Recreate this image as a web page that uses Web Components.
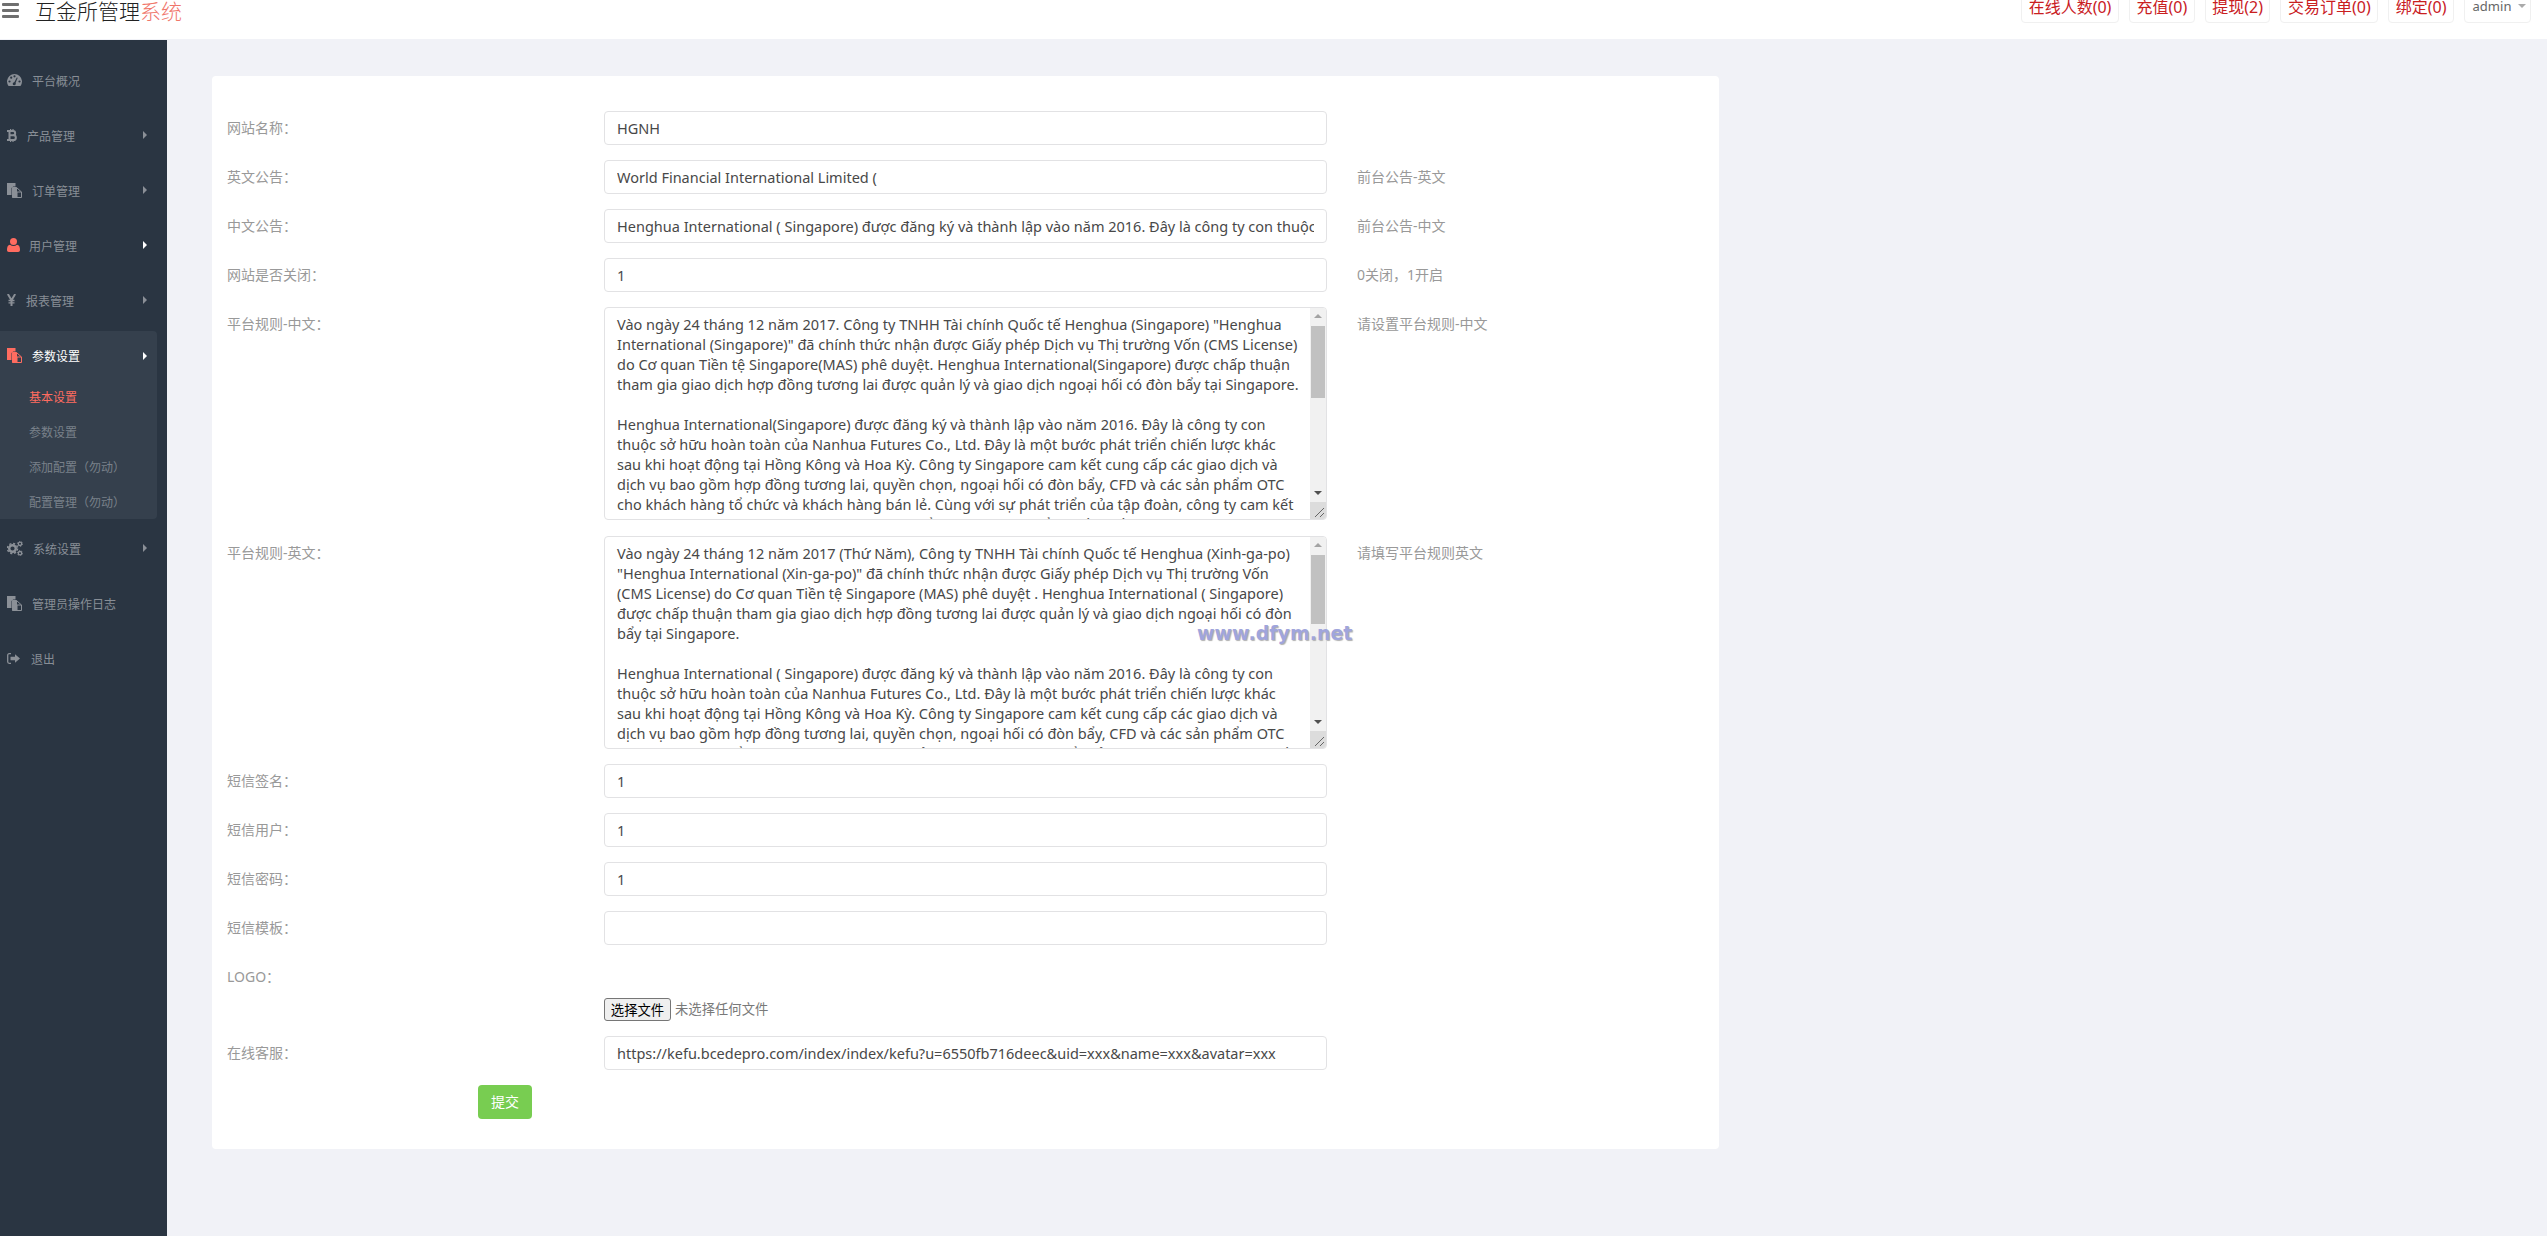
<!DOCTYPE html>
<html lang="zh">
<head>
<meta charset="utf-8">
<title>互金所管理系统</title>
<style>
  html, body { margin: 0; height: 100%; overflow: hidden; }
  body { font-family: "Noto Sans", "Noto Sans CJK SC", sans-serif; font-size: 14px; background: #f1f2f7; }
</style>
</head>
<body>
<admin-app>
  <admin-topbar slot="top"></admin-topbar>
  <admin-sidebar slot="side"></admin-sidebar>
  <settings-form></settings-form>
</admin-app>
<water-mark>www.dfym.net</water-mark>

<script>
const ICONS = {
  gauge: `<svg width="15" height="12" viewBox="0 0 15 12"><path fill="currentColor" d="M1.500 12A7.500 7.500 0 1 1 13.500 12z"/><g fill="#2a3542"><circle cx="2.500" cy="7.500" r="1.100"/><circle cx="4.200" cy="3.700" r="1.100"/><circle cx="7.500" cy="2.300" r="1.100"/><circle cx="12.500" cy="7.500" r="1.100"/><circle cx="7.200" cy="9.800" r="1.500"/><path d="M6.700 9.500 9.800 3.400l.9.400L8 10.200z"/></g></svg>`,
  btc: `<svg width="10" height="13" viewBox="0 0 10 13"><path fill="none" stroke="currentColor" stroke-width="2" d="M0 2h6a2.100 2.100 0 0 1 0 4.300H2.500h4a2.350 2.350 0 0 1 0 4.700H0M2.500 2v9"/><path fill="none" stroke="currentColor" stroke-width="1.200" d="M3.600 0v2M6 0v2M3.600 11v2M6 11v2"/></svg>`,
  files: `<svg width="15" height="15" viewBox="0 0 15 15"><path fill="currentColor" d="M0 0h8.500v3.500H6.200L4.500 5v7H0z"/><path fill="currentColor" d="M5 4.500h4V9h1.500v5.500H5z"/><path fill="none" stroke="currentColor" stroke-width="1" d="M5.500 4.500h4l5 4.500v5.500h-9zM9.500 4.500V9h5"/></svg>`,
  user: `<svg width="13" height="14" viewBox="0 0 13 14"><circle cx="6.500" cy="3.500" r="3.500" fill="currentColor"/><path fill="currentColor" d="M0 12c0-3 .8-5 3-5.200 2 1.600 5 1.600 7 0 2.200.2 3 2.200 3 5.200 0 1.200-.8 2-1.800 2H1.800C.8 14 0 13.200 0 12z"/></svg>`,
  yen: `<svg width="9" height="12" viewBox="0 0 9 12"><path fill="none" stroke="currentColor" stroke-width="2" d="M.8 0 4.500 6.200 8.200 0M4.500 6v6"/><path fill="none" stroke="currentColor" stroke-width="1.300" d="M1.500 6.500h6M1.500 8.800h6"/></svg>`,
  cogs: `<svg width="16" height="15" viewBox="0 0 16 15"><circle cx="5.500" cy="7.500" r="3.300" fill="none" stroke="currentColor" stroke-width="2.400"/><circle cx="5.500" cy="7.500" r="5" fill="none" stroke="currentColor" stroke-width="1.500" stroke-dasharray="2.100 1.830"/><circle cx="13" cy="2.800" r="1.700" fill="none" stroke="currentColor" stroke-width="1.300"/><circle cx="13" cy="12.200" r="1.700" fill="none" stroke="currentColor" stroke-width="1.300"/><circle cx="13" cy="2.800" r="2.600" fill="none" stroke="currentColor" stroke-width=".9" stroke-dasharray="1.200 1.520"/><circle cx="13" cy="12.200" r="2.600" fill="none" stroke="currentColor" stroke-width=".9" stroke-dasharray="1.200 1.520"/></svg>`,
  logout: `<svg width="13" height="11" viewBox="0 0 13 11"><path fill="none" stroke="currentColor" stroke-width="1.300" d="M4 .7H2.200C1.300.7.700 1.300.7 2.200v6.600c0 .9.600 1.500 1.500 1.500H4"/><path fill="currentColor" d="M3.500 3.800h4.500V1.200L13 5.500 8 9.800V7.200H3.500z"/></svg>`,
};

class AdminApp extends HTMLElement {
  connectedCallback() {
    this.attachShadow({ mode: "open" }).innerHTML = `
      <style>
        :host { display: grid; grid-template: 39px 1fr / 167px 1fr; height: 1236px; background: #f1f2f7; }
        .top { grid-column: 1 / 3; }
        .side { display: flex; padding-top: 1px; min-height: 0; }
        main { padding: 37px 0 0 45px; min-width: 0; }
      </style>
      <div class="top"><slot name="top"></slot></div>
      <div class="side"><slot name="side"></slot></div>
      <main><slot></slot></main>
    `;
  }
}

class AdminTopbar extends HTMLElement {
  connectedCallback() {
    const links = ["在线人数(0)", "充值(0)", "提现(2)", "交易订单(0)", "绑定(0)"];
    this.attachShadow({ mode: "open" }).innerHTML = `
      <style>
        :host { display: flex; height: 39px; background: #fff; overflow: hidden; align-items: flex-start; padding-right: 16px; box-sizing: border-box; }
        .bars { display: flex; flex-direction: column; gap: 3px; width: 17px; margin: 3px 0 0 2px; }
        .bars i { display: block; height: 3px; background: #6f6f6f; border-radius: 1px; }
        .brand { font-size: 21px; line-height: 24px; margin: -2px 0 0 16px; color: #222; font-weight: 300; font-family: "Noto Sans CJK SC", sans-serif; }
        .brand span { color: #f0766b; }
        nav { display: flex; gap: 10px; margin: -11px 0 0 auto; }
        a { display: flex; align-items: center; justify-content: center; height: 34px; box-sizing: border-box; padding: 0 6.5px; border: 1px solid #f0f0f0; border-radius: 4px; font-size: 16px; color: #c9201f; white-space: nowrap; font-family: "Noto Sans", "Noto Sans CJK SC", sans-serif; }
        .admin { width: 67px; padding: 0 0 0 4px; font-size: 13px; color: #666; gap: 7px; }
        .admin i { border: 4px solid transparent; border-top-color: #aaa; border-bottom: 0; }
      </style>
      <div class="bars"><i></i><i></i><i></i></div>
      <div class="brand">互金所管理<span>系统</span></div>
      <nav>
        ${links.map((l) => `<a>${l}</a>`).join("")}
        <a class="admin">admin<i></i></a>
      </nav>
    `;
  }
}

class SideItem extends HTMLElement {
  connectedCallback() {
    const icon = ICONS[this.getAttribute("icon")];
    const gap = this.getAttribute("gap") || 10;
    const arrow = this.hasAttribute("arrow");
    this.attachShadow({ mode: "open" }).innerHTML = `
      <style>
        :host { display: flex; align-items: center; height: 55px; padding-left: 7px; box-sizing: border-box; color: #888e96; font-size: 12px; font-family: "Noto Sans CJK SC", sans-serif; }
        :host([lit]) .ic { color: #ff6c60; }
        :host([lit]) .ar { border-left-color: #fff; }
        :host([current]) { color: #fff; height: 50px; }
        :host([current]) .ar { margin-right: 10px; }
        .ic { display: flex; flex: none; color: #8b9097; margin-right: ${gap}px; }
        .ar { margin-left: auto; margin-right: 20px; border: 4px solid transparent; border-left-color: #8b9097; border-right: 0; }
      </style>
      <span class="ic">${icon}</span><slot></slot>${arrow ? `<span class="ar"></span>` : ""}
    `;
  }
}

class SideGroup extends HTMLElement {
  connectedCallback() {
    this.attachShadow({ mode: "open" }).innerHTML = `
      <style>
        :host { display: block; width: 157px; height: 188px; margin: 3px 0 2px; background: #35404d; border-radius: 0 4px 4px 0; overflow: hidden; }
        .subs { margin-top: -2px; }
      </style>
      <slot name="head"></slot>
      <div class="subs"><slot></slot></div>
    `;
  }
}

class SubLink extends HTMLElement {
  connectedCallback() {
    this.attachShadow({ mode: "open" }).innerHTML = `
      <style>
        :host { display: flex; align-items: center; height: 35px; padding-left: 29px; font-size: 12px; color: #79808a; font-family: "Noto Sans CJK SC", sans-serif; white-space: nowrap; }
        :host([active]) { color: #ff6c60; }
      </style>
      <slot></slot>
    `;
  }
}

class AdminSidebar extends HTMLElement {
  connectedCallback() {
    this.attachShadow({ mode: "open" }).innerHTML = `
      <style>
        :host { display: block; width: 167px; padding-top: 12.5px; box-sizing: border-box; background: #2a3542; }
      </style>
      <side-item icon="gauge">平台概况</side-item>
      <side-item icon="btc" arrow>产品管理</side-item>
      <side-item icon="files" arrow>订单管理</side-item>
      <side-item icon="user" arrow lit gap="9">用户管理</side-item>
      <side-item icon="yen" arrow>报表管理</side-item>
      <side-group>
        <side-item slot="head" icon="files" arrow lit current>参数设置</side-item>
        <sub-link active>基本设置</sub-link>
        <sub-link>参数设置</sub-link>
        <sub-link>添加配置（勿动）</sub-link>
        <sub-link>配置管理（勿动）</sub-link>
      </side-group>
      <side-item icon="cogs" arrow>系统设置</side-item>
      <side-item icon="files">管理员操作日志</side-item>
      <side-item icon="logout" gap="11">退出</side-item>
    `;
  }
}

class FormRow extends HTMLElement {
  connectedCallback() {
    this.attachShadow({ mode: "open" }).innerHTML = `
      <style>
        :host { display: grid; grid-template-columns: 377px 723px 1fr; font-size: 14px; line-height: 34px; font-family: "Noto Sans", "Noto Sans CJK SC", sans-serif; color: #999; }
        .help { padding-left: 30px; white-space: nowrap; }
      </style>
      <div>${this.getAttribute("label") || ""}</div>
      <div><slot></slot></div>
      <div class="help">${this.getAttribute("help") || ""}</div>
    `;
  }
}

class TextField extends HTMLElement {
  connectedCallback() {
    this.attachShadow({ mode: "open" }).innerHTML = `
      <style>
        :host { display: block; height: 34px; box-sizing: border-box; padding: 0 12px; background: #fff; border: 1px solid #e2e2e4; border-radius: 4px; color: #484848; font-size: 14.5px; line-height: 32px; }
        div { height: 100%; overflow: hidden; white-space: nowrap; }
      </style>
      <div><slot></slot></div>
    `;
  }
}

class RuleBox extends HTMLElement {
  connectedCallback() {
    const thumbTop = this.getAttribute("thumb-top");
    const thumbH = this.getAttribute("thumb-h");
    this.attachShadow({ mode: "open" }).innerHTML = `
      <style>
        :host { display: flex; height: 213px; box-sizing: border-box; background: #fff; border: 1px solid #e2e2e4; border-radius: 4px; color: #484848; font-size: 14.5px; line-height: 20px; overflow: hidden; }
        .txt { flex: 1; min-width: 0; padding: 6px 8px 0 7px; margin-left: 5px; overflow: hidden; white-space: pre-line; }
        .bar { display: flex; flex-direction: column; width: 16px; background: #f1f1f1; }
        .thumb { height: ${thumbH}px; margin: ${thumbTop}px 1px 0; background: #c1c1c1; }
        .up, .down { height: 0; width: 0; align-self: center; border: 4px solid transparent; border-top: 0; border-bottom: 4px solid #a3a3a3; margin-top: 6px; }
        .down { border-bottom: 0; border-top: 4px solid #505050; margin-top: auto; margin-bottom: 7px; }
        .grip { height: 17px; background: #dcdcdc; }
        .grip svg { display: block; }
      </style>
      <div class="txt"><slot></slot></div>
      <div class="bar">
        <i class="up"></i>
        <div class="thumb"></div>
        <i class="down"></i>
        <div class="grip"><svg width="16" height="17" viewBox="0 0 16 17"><path fill="none" stroke="#666" d="M5 15 14 6M10 15l4-4"/></svg></div>
      </div>
    `;
  }
}

class SettingsForm extends HTMLElement {
  connectedCallback() {
    this.attachShadow({ mode: "open" }).innerHTML = `
      <style>
        :host { display: flex; flex-direction: column; gap: 15px; width: 1507px; box-sizing: border-box; padding: 35px 0 30px 15px; background: #fff; border-radius: 4px; font-family: "Noto Sans", "Noto Sans CJK SC", sans-serif; }
        .second { margin-top: 1px; }
        .file { display: flex; flex-direction: column; height: 61px; justify-content: flex-end; }
        .pick { display: flex; align-items: center; gap: 4px; font-size: 13.33px; line-height: 23px; color: #797979; }
        button { width: 67px; height: 23px; padding: 0; box-sizing: border-box; background: #efefef; border: 1px solid #767676; border-radius: 3px; color: #000; font: inherit; line-height: 20px; }
        .send { width: 54px; height: 34px; margin-left: 251px; background: #78cd51; border: 0; border-radius: 4px; color: #fff; font-size: 14px; }
      </style>
      <form-row label="网站名称："><text-field>HGNH</text-field></form-row>
      <form-row label="英文公告：" help="前台公告-英文"><text-field>World Financial International Limited (</text-field></form-row>
      <form-row label="中文公告：" help="前台公告-中文"><text-field>Henghua International ( Singapore) được đăng ký và thành lập vào năm 2016. Đây là công ty con thuộc sở hữu hoàn toàn của Nanhua Futures Co., Ltd.</text-field></form-row>
      <form-row label="网站是否关闭：" help="0关闭，1开启"><text-field>1</text-field></form-row>
      <form-row label="平台规则-中文：" help="请设置平台规则-中文"><rule-box thumb-top="8" thumb-h="72">Vào ngày 24 tháng 12 năm 2017. Công ty TNHH Tài chính Quốc tế Henghua (Singapore) "Henghua International (Singapore)" đã chính thức nhận được Giấy phép Dịch vụ Thị trường Vốn (CMS License) do Cơ quan Tiền tệ Singapore(MAS) phê duyệt. Henghua International(Singapore) được chấp thuận tham gia giao dịch hợp đồng tương lai được quản lý và giao dịch ngoại hối có đòn bẩy tại Singapore.

Henghua International(Singapore) được đăng ký và thành lập vào năm 2016. Đây là công ty con thuộc sở hữu hoàn toàn của Nanhua Futures Co., Ltd. Đây là một bước phát triển chiến lược khác sau khi hoạt động tại Hồng Kông và Hoa Kỳ. Công ty Singapore cam kết cung cấp các giao dịch và dịch vụ bao gồm hợp đồng tương lai, quyền chọn, ngoại hối có đòn bẩy, CFD và các sản phẩm OTC cho khách hàng tổ chức và khách hàng bán lẻ. Cùng với sự phát triển của tập đoàn, công ty cam kết xây dựng Henghua International thành một tổ chức tài chính đẳng cấp thế giới.</rule-box></form-row>
      <form-row class="second" label="平台规则-英文：" help="请填写平台规则英文"><rule-box thumb-top="8" thumb-h="69">Vào ngày 24 tháng 12 năm 2017 (Thứ Năm), Công ty TNHH Tài chính Quốc tế Henghua (Xinh-ga-po) "Henghua International (Xin-ga-po)" đã chính thức nhận được Giấy phép Dịch vụ Thị trường Vốn (CMS License) do Cơ quan Tiền tệ Singapore (MAS) phê duyệt . Henghua International ( Singapore) được chấp thuận tham gia giao dịch hợp đồng tương lai được quản lý và giao dịch ngoại hối có đòn bẩy tại Singapore.

Henghua International ( Singapore) được đăng ký và thành lập vào năm 2016. Đây là công ty con thuộc sở hữu hoàn toàn của Nanhua Futures Co., Ltd. Đây là một bước phát triển chiến lược khác sau khi hoạt động tại Hồng Kông và Hoa Kỳ. Công ty Singapore cam kết cung cấp các giao dịch và dịch vụ bao gồm hợp đồng tương lai, quyền chọn, ngoại hối có đòn bẩy, CFD và các sản phẩm OTC cho khách hàng tổ chức và khách hàng bán lẻ. Cùng với sự phát triển của tập đoàn, công ty cam kết xây dựng Henghua International.</rule-box></form-row>
      <form-row label="短信签名："><text-field>1</text-field></form-row>
      <form-row label="短信用户："><text-field>1</text-field></form-row>
      <form-row label="短信密码："><text-field>1</text-field></form-row>
      <form-row label="短信模板："><text-field></text-field></form-row>
      <form-row label="LOGO：">
        <div class="file"><div class="pick"><button type="button">选择文件</button>未选择任何文件</div></div>
      </form-row>
      <form-row label="在线客服："><text-field>https://kefu.bcedepro.com/index/index/kefu?u=6550fb716deec&amp;uid=xxx&amp;name=xxx&amp;avatar=xxx</text-field></form-row>
      <div><button type="button" class="send">提交</button></div>
    `;
  }
}

class WaterMark extends HTMLElement {
  connectedCallback() {
    this.attachShadow({ mode: "open" }).innerHTML = `
      <style>
        :host { position: absolute; left: 1197px; top: 621px; font: bold 19px/24px "DejaVu Sans", sans-serif; color: #a0a5dc; text-shadow: 1px 1px 1px #b0b0b0; white-space: nowrap; }
      </style>
      <slot></slot>
    `;
  }
}

customElements.define("admin-app", AdminApp);
customElements.define("admin-topbar", AdminTopbar);
customElements.define("side-item", SideItem);
customElements.define("side-group", SideGroup);
customElements.define("sub-link", SubLink);
customElements.define("admin-sidebar", AdminSidebar);
customElements.define("form-row", FormRow);
customElements.define("text-field", TextField);
customElements.define("rule-box", RuleBox);
customElements.define("settings-form", SettingsForm);
customElements.define("water-mark", WaterMark);
</script>
</body>
</html>
